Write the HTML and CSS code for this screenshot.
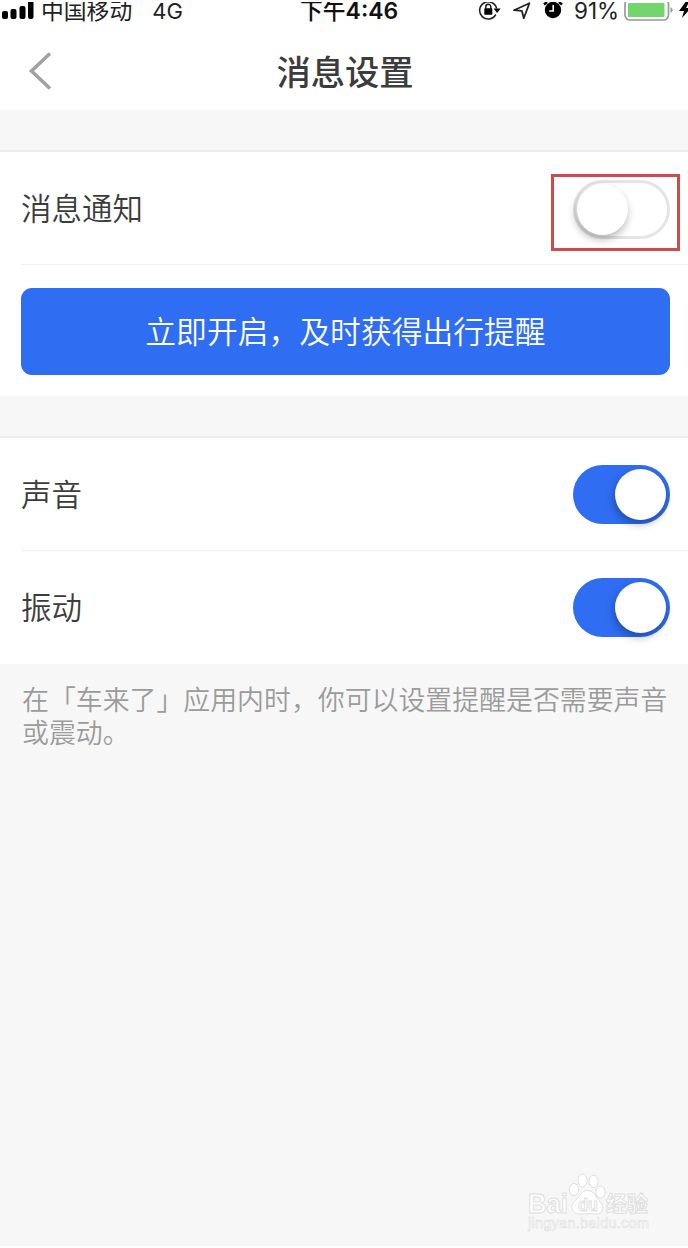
FILE: index.html
```html
<!DOCTYPE html>
<html lang="zh-CN">
<head>
  <meta charset="UTF-8">
  <title>消息设置</title>
  <link rel="stylesheet" href="styles.css">
</head>
<body>
  <div class="page">
    <div class="status-bar">
      <div class="status-left">
        <svg class="signal" width="32" height="22" viewBox="0 0 32 22">
          <rect x="0" y="9" width="6" height="8" rx="2"/>
          <rect x="8.5" y="7" width="6" height="10" rx="2"/>
          <rect x="17.5" y="4" width="6" height="13" rx="2"/>
          <rect x="26" y="-3" width="5.5" height="20" rx="2"/>
        </svg>
        <span class="carrier">中国移动</span>
        <span class="network">4G</span>
      </div>
      <div class="time">下午<b>4:46</b></div>
      <div class="status-right">
        <svg class="lock" width="24" height="22" viewBox="0 0 24 22">
          <path d="M17.8 12.5A8.6 8.6 0 1 1 18.6 6.5" fill="none" stroke="#222" stroke-width="1.6"/>
          <path d="M15.6 6.5h7l-3.5 4.5z"/>
          <rect x="6.3" y="6.3" width="8" height="6.5" rx="0.6"/>
          <path d="M7.8 7V4.8a2.5 2.5 0 0 1 5 0V7" fill="none" stroke="#111" stroke-width="1.4"/>
        </svg>
        <svg class="arrow" width="20" height="22" viewBox="0 0 20 22">
          <path d="M2 8.2L17.4 1.2L11.8 16.2L9.8 8.8Z" fill="none" stroke="#222" stroke-width="1.8" stroke-linejoin="round"/>
        </svg>
        <svg class="alarm" width="20" height="22" viewBox="0 0 20 22">
          <circle cx="10" cy="8" r="8.2"/>
          <path d="M1 2.5L4 0M19 2.5L16 0" stroke="#000" stroke-width="2.4"/>
          <path d="M10.2 3v6H6.2" fill="none" stroke="#fff" stroke-width="1.6"/>
        </svg>
        <span class="percent">91%</span>
        <svg class="battery" width="64" height="22" viewBox="0 0 64 22">
          <rect x="1" y="-3" width="43.5" height="21" rx="5" fill="#fff" stroke="#999" stroke-width="1.7"/>
          <rect x="4" y="1" width="36.5" height="14" rx="1" fill="#73d66c"/>
          <path d="M46.5 5q4.5 3 0 6z" fill="#999"/>
          <path d="M61.5 0L55 9h5l-2 7L67 6h-5l3-6z"/>
        </svg>
      </div>
    </div>

    <div class="nav">
      <svg class="back" width="24" height="38" viewBox="0 0 24 38">
        <path d="M22 1.5L3.5 19L22 36.5" fill="none" stroke="#a2a2a2" stroke-width="3.6"/>
      </svg>
      <h1>消息设置</h1>
    </div>

    <div class="group">
      <div class="row">
        <span>消息通知</span>
        <div class="highlight">
          <div class="switch"></div>
        </div>
      </div>
      <div class="button-wrap">
        <button class="open-button">立即开启，及时获得出行提醒</button>
      </div>
    </div>

    <div class="group">
      <div class="row">
        <span>声音</span>
        <div class="switch on"></div>
      </div>
      <div class="row last">
        <span>振动</span>
        <div class="switch on"></div>
      </div>
    </div>

    <p class="tip">在「车来了」应用内时，你可以设置提醒是否需要声音或震动。</p>

    <!-- watermark -->
    <svg class="watermark" width="130" height="64" viewBox="0 0 130 64">
      <g class="mark">
        <ellipse cx="51" cy="21.5" rx="4.6" ry="6"/>
        <ellipse cx="59.5" cy="12.5" rx="4.6" ry="6.5"/>
        <ellipse cx="70.5" cy="13.5" rx="4.6" ry="6.2"/>
        <ellipse cx="77.5" cy="24" rx="4.6" ry="6"/>
        <path d="M64.5 22.5c-6 0-7 5-11 9c-7 5-6 14 3 14.5c5 0.5 10-1 15 0c9 1.5 11-8 5-13c-4-4-5-10.500-12-10.500z"/>
      </g>
      <g class="mark brand">
        <text x="5" y="44.5" font-size="27" textLength="40" lengthAdjust="spacingAndGlyphs">Bai</text>
        <text class="du" x="55" y="42.5" font-size="18" textLength="20" lengthAdjust="spacingAndGlyphs">du</text>
        <text x="83" y="43" font-size="21" textLength="42">经验</text>
      </g>
      <text class="mark url" x="5" y="60" font-size="14.5" textLength="121">jingyan.baidu.com</text>
    </svg>
  </div>
</body>
</html>
```

FILE: styles.css
```css
* {
  box-sizing: border-box;
}

body {
  margin: 0;
  background-color: #fff;
  font-family: Inter, 'Noto Sans CJK SC', sans-serif;
  color: #3c3c3c;
}

.page {
  position: relative;
  height: 1246px;
  background-color: #f7f7f7;
  overflow: hidden;
}

.status-bar {
  display: grid;
  grid-template-columns: 300px 178px 210px;
  height: 24px;
  border-top: 2px solid #fff;
  background-color: #fff;
  color: #222;
  font-size: 22.8px;
  line-height: 18px;
  white-space: nowrap;
  overflow: hidden;
}

.status-left,
.status-right {
  display: flex;
}

.signal {
  margin-left: 2px;
}

.carrier {
  margin-left: 7px;
}

.network {
  margin-left: 20px;
  font-size: 22px;
}

.time {
  color: #111;
  font-weight: 500;
}

.time b {
  font-weight: 600;
  font-size: 23px;
}

.arrow {
  margin-left: 10px;
}

.alarm {
  margin-left: 11px;
}

.percent {
  width: 50px;
  margin-left: 11px;
  font-size: 22.5px;
}

.nav {
  display: grid;
  grid-template-columns: 60px 1fr 60px;
  align-items: center;
  height: 86px;
  padding-top: 8px;
  background-color: #fff;
}

.back {
  margin-left: 28px;
}

h1 {
  margin: 0;
  padding-top: 3px;
  padding-left: 2px;
  font-size: 34.3px;
  font-weight: 500;
  line-height: 50px;
  text-align: center;
}

.group {
  margin-top: 40px;
  border-top: 2px solid #ededed;
  background-color: #fff;
}

.row {
  display: flex;
  align-items: center;
  justify-content: space-between;
  height: 113px;
  margin-left: 21px;
  padding-right: 18px;
  border-bottom: 1px solid #f0f0f0;
  font-size: 30.5px;
  font-weight: 350;
}

.row.last {
  border-bottom: none;
}

.row > span {
  padding-bottom: 3px;
}

.highlight {
  width: 129px;
  height: 77px;
  margin: 8px -10px 0 0;
  padding: 6px 8px 0 19px;
  border: 3px solid #cf4b4b;
}

.highlight .switch {
  margin-top: -3px;
}

.switch {
  width: 97px;
  height: 59px;
  padding: 4px;
  border-radius: 30px;
  background-color: #fff;
  box-shadow: inset 0 0 0 3px #e4e4e4;
}

.switch::before {
  content: "";
  display: block;
  width: 51px;
  height: 51px;
  border-radius: 50%;
  background-color: #fff;
  box-shadow: -1px 4px 9px rgba(0, 0, 0, 0.3);
}

.switch.on {
  background-color: #2f6df2;
  box-shadow: none;
}

.switch.on::before {
  margin-left: 38px;
}

.button-wrap {
  padding: 23px 18px 21px 21px;
}

.open-button {
  display: block;
  width: 100%;
  height: 87px;
  padding: 0 0 4px;
  border: none;
  border-radius: 11px;
  background-color: #2f6df2;
  color: #fff;
  font-family: inherit;
  font-size: 30.8px;
  font-weight: 350;
}

.tip {
  margin: 20px 18px 0 22px;
  color: #9b9b9b;
  font-size: 26.9px;
  font-weight: 350;
  line-height: 33px;
}

.watermark {
  position: absolute;
  right: 35px;
  bottom: 14px;
}

.mark {
  fill: #fff;
  stroke: #dedede;
  stroke-width: 1;
}

.brand {
  font-family: 'Liberation Sans', 'Noto Sans CJK SC', sans-serif;
  font-weight: 700;
}

.url {
  font-family: 'Liberation Sans', sans-serif;
  stroke-width: 0.6;
}
```
